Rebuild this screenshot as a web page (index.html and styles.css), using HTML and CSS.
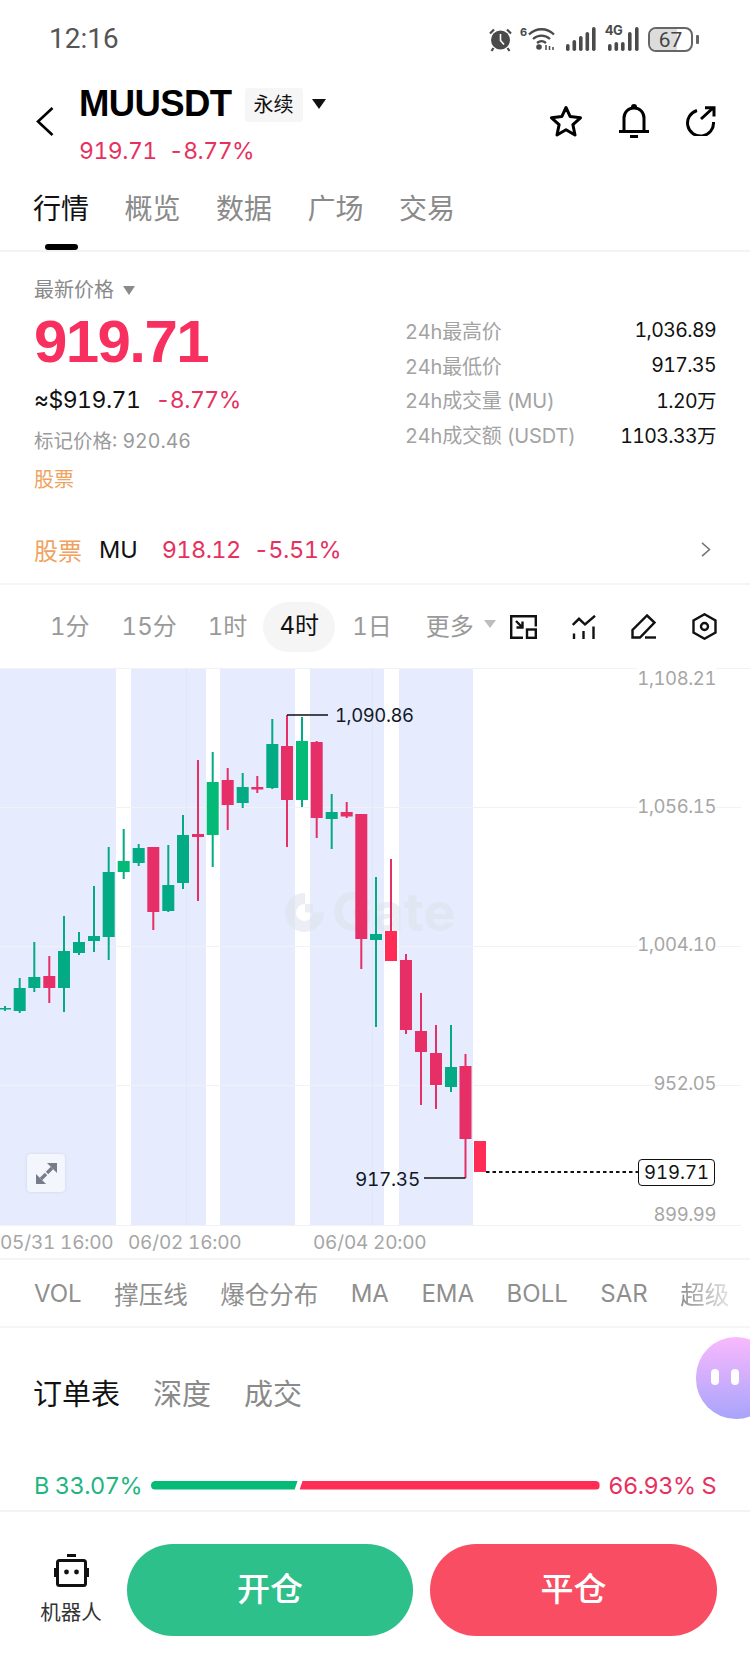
FILE: index.html
```html
<!DOCTYPE html>
<html lang="zh-CN">
<head>
  <meta charset="UTF-8">
  <meta name="viewport" content="width=device-width, initial-scale=1.0">
  <title>MUUSDT</title>
  <link rel="stylesheet" href="styles.css">
</head>

<body>

  <!-- Status bar -->
  <div class="status-bar">
    <span class="clock">12:16</span>
    <div class="status-icons">
      <svg class="alarm" width="25" height="25" viewBox="0 0 25 25">
        <circle cx="12.5" cy="13" r="9.5" fill="#4a4a4a"/>
        <path d="M12.5 7v6.5l3.5 4" fill="none" stroke="#fff" stroke-width="1.6"/>
        <path d="M2 6.5 6 2.5M23 6.5l-4-4M5.5 21 3.5 24M19.5 21l2 3" stroke="#4a4a4a" stroke-width="2.2" fill="none"/>
      </svg>
      <span class="wifi-six">6</span>
      <svg class="wifi" width="27" height="24" viewBox="0 0 27 24" fill="none" stroke="#4a4a4a" stroke-width="2.3">
        <path d="M1 7.5C8 .5 19 .5 26 7.5M5 12c5-4.5 12-4.5 17 0M9 16c3-2.5 6-2.5 9 0"/>
        <circle cx="11" cy="20" r="2.8" fill="#4a4a4a" stroke="none"/>
        <path d="M18 18v5M21.5 19v4M25 20v3" stroke-width="1.5"/>
      </svg>
      <svg class="bars" width="30" height="24" viewBox="0 0 30 24" fill="#4a4a4a">
        <rect x="0" y="17" width="3.6" height="7" rx="1.8"/>
        <rect x="6.5" y="13" width="3.6" height="11" rx="1.8"/>
        <rect x="13" y="9" width="3.6" height="15" rx="1.8"/>
        <rect x="19.5" y="5" width="3.6" height="19" rx="1.8"/>
        <rect x="26" y="0" width="3.6" height="24" rx="1.8"/>
      </svg>
      <div class="bars-4g">
        <span class="net-label">4G</span>
        <svg width="34" height="24" viewBox="0 0 34 24" fill="#4a4a4a">
          <rect x="3" y="17" width="3.6" height="7" rx="1.8"/>
          <rect x="9.5" y="15" width="3.6" height="9" rx="1.8"/>
          <rect x="16" y="15" width="3.6" height="9" rx="1.8"/>
          <rect x="23" y="5" width="3.6" height="19" rx="1.8"/>
          <rect x="30" y="0" width="3.6" height="24" rx="1.8"/>
        </svg>
      </div>
      <div class="battery">
        <div class="battery-fill"></div>
        <span class="battery-num">67</span>
      </div>
      <div class="battery-nub"></div>
    </div>
  </div>

  <!-- Header -->
  <header class="top-bar">
    <svg class="back" width="18" height="29" viewBox="0 0 18 29" fill="none" stroke="#000" stroke-width="2.6">
      <path d="M16.5 1 2 14.5 16.5 28"/>
    </svg>
    <div class="title-block">
      <div class="title-row">
        <span class="symbol">MUUSDT</span>
        <span class="badge">永续</span>
        <span class="title-caret"></span>
      </div>
      <div class="title-price">
        <span>919.71</span>
        <span>-8.77%</span>
      </div>
    </div>
    <div class="top-actions">
      <svg class="star" width="34" height="32" viewBox="0 0 34 32" fill="none" stroke="#000" stroke-width="3" stroke-linejoin="round">
        <path d="M17 2.5 21.2 11.6 31.5 12.8 23.9 19.6 26 30 17 24.8 8 30 10.1 19.6 2.5 12.8 12.8 11.6Z"/>
      </svg>
      <svg width="30" height="34" viewBox="0 0 30 34" fill="none" stroke="#000" stroke-width="3">
        <path d="M5 27V14C5 8 9.5 4 15 4S25 8 25 14V27"/>
        <path d="M0 27.5H30M11 32.5H19"/>
        <path d="M13.5 3A1.5 1.5 0 0 1 16.5 3"/>
      </svg>
      <svg width="32" height="30" viewBox="0 0 32 30" fill="none" stroke="#000" stroke-width="3">
        <path d="M13 4.5A13 13 0 1 0 29.5 16"/>
        <path d="M17 13 29 2M21 1.8H30V10.5"/>
      </svg>
    </div>
  </header>

  <nav class="main-tabs">
    <a class="tab active">行情</a>
    <a class="tab">概览</a>
    <a class="tab">数据</a>
    <a class="tab">广场</a>
    <a class="tab">交易</a>
  </nav>

  <!-- Price summary -->
  <section class="summary">
    <div class="summary-left">
      <div class="latest-label">最新价格 <span class="caret-grey"></span></div>
      <div class="big-price">919.71</div>
      <div class="usd-row">
        <span class="usd">≈$919.71</span>
        <span class="red">-8.77%</span>
      </div>
      <div class="mark-price">标记价格: 920.46</div>
      <div class="orange tag">股票</div>
    </div>
    <dl class="stats">
      <div class="stat"><dt>24h最高价</dt><dd>1,036.89</dd></div>
      <div class="stat"><dt>24h最低价</dt><dd>917.35</dd></div>
      <div class="stat"><dt>24h成交量 (MU)</dt><dd>1.20万</dd></div>
      <div class="stat"><dt>24h成交额 (USDT)</dt><dd>1103.33万</dd></div>
    </dl>
  </section>

  <div class="stock-row">
    <span class="orange stock-tag">股票</span>
    <span class="stock-name">MU</span>
    <span class="red stock-price">918.12</span>
    <span class="red stock-change">-5.51%</span>
    <svg class="stock-arrow" width="10" height="15" viewBox="0 0 10 15" fill="none" stroke="#777" stroke-width="1.6">
      <path d="M1 .8 8.5 7.5 1 14.2"/>
    </svg>
  </div>

  <!-- Period selector -->
  <div class="period-row">
    <div class="periods">
      <span class="period p1">1分</span>
      <span class="period p2">15分</span>
      <span class="period p3">1时</span>
      <span class="period current">4时</span>
      <span class="period p5">1日</span>
      <span class="period p6">更多<i class="caret-light"></i></span>
    </div>
    <div class="chart-tools">
      <svg width="27" height="24" viewBox="0 0 27 24" fill="none" stroke="#111" stroke-width="2.4">
        <path d="M13 22.8H1.2V1.2H25.8V11.5"/>
        <rect x="17" y="14.5" width="8.8" height="8.3"/>
        <path d="M6 6 12 12M12.5 6.5V12.5H6.5"/>
      </svg>
      <svg width="24" height="24" viewBox="0 0 24 24" fill="none" stroke="#111" stroke-width="2.4">
        <path d="M.8 10 7 3.8 13 9.5 23 .8"/>
        <path d="M2 18.5V24M11.5 16V24M21.5 11.5V24"/>
      </svg>
      <svg width="26" height="25" viewBox="0 0 26 25" fill="none" stroke="#111" stroke-width="2.4">
        <path d="M16 1.5 23.5 8.5 9 23.5H1.5V16Z"/>
        <path d="M14 23.5H25"/>
      </svg>
      <svg width="25" height="27" viewBox="0 0 25 27" fill="none" stroke="#111" stroke-width="2.4">
        <path d="M12.5 1.3 23.5 7.5V19.5L12.5 25.7 1.5 19.5V7.5Z"/>
        <circle cx="12.5" cy="13.5" r="3.5"/>
      </svg>
    </div>
  </div>

  <!-- Chart: coordinates in the svg are page pixels -->
  <div class="chart">
    <svg class="chart-svg" width="750" height="558" viewBox="0 668 750 558">
      <g fill="#e6ebfd">
        <rect x="0" y="668" width="116" height="557"/>
        <rect x="131" y="668" width="75" height="557"/>
        <rect x="220" y="668" width="75" height="557"/>
        <rect x="310" y="668" width="74" height="557"/>
        <rect x="399" y="668" width="74" height="557"/>
      </g>
      <g stroke="#f2f2f4" stroke-width="1">
        <path d="M0 668.5H750"/>
        <path d="M0 807.5H741M0 946.5H741M0 1085.5H741M0 1225.5H741"/>
        <path d="M186.5 668V1225M372.5 668V1225" stroke="#e1e6f8"/>
      </g>

      <!-- watermark -->
      <g fill="#dee3ee" opacity="0.6">
        <path d="M305 893a19.5 19.5 0 1 0 19 19.5H313a8.5 8.5 0 1 1-8-8.5Z"/>
        <path d="M305 904h8v8.5h-8Z"/>
      </g>
      <text class="watermark" x="332" y="931">Gate</text>

      <!-- wicks and bodies -->
      <g class="up">
        <path d="M5 1006V1011M19.7 978V1013M34.3 942V992M64 916V1012M79 932V955M94 886V952M108.7 847V960M123.7 829V879M138.7 844V866M168.3 845V912M183 815V889M212.7 752V867M242.7 773V808M272.3 719V789M302 717V807M331.7 794V849M376 877V1027M451 1025V1092"/>
      </g>
      <g class="up-fill">
        <rect x="0" y="1008" width="11" height="1.5"/>
        <rect x="13.7" y="988" width="12" height="23"/>
        <rect x="28.3" y="977" width="12" height="11"/>
        <rect x="58" y="951" width="12" height="37"/>
        <rect x="73" y="942" width="12" height="11"/>
        <rect x="88" y="936" width="12" height="5"/>
        <rect x="102.7" y="872" width="12" height="65"/>
        <rect class="bright" x="117.7" y="861" width="12" height="11"/>
        <rect x="132.7" y="848" width="12" height="15"/>
        <rect x="162.3" y="885" width="12" height="26"/>
        <rect x="177" y="835" width="12" height="48"/>
        <rect class="bright" x="206.7" y="782" width="12" height="53"/>
        <rect x="236.7" y="787" width="12" height="16"/>
        <rect x="266.3" y="744" width="12" height="44"/>
        <rect class="bright" x="296" y="741" width="12" height="59"/>
        <rect x="325.7" y="812" width="12" height="7"/>
        <rect x="370" y="934" width="12" height="6"/>
        <rect x="445" y="1067" width="12" height="20"/>
      </g>
      <g class="down">
        <path d="M49.3 956V1003M153.3 847V930M198 760V901M227.7 768V830M257.3 776V793M287 715V847M316.7 741V838M346.7 802V818M361.3 814V969M391 859V960M406 954V1034M421 993V1105M436 1025V1109M465.5 1054V1178"/>
      </g>
      <g class="down-fill">
        <rect x="43.3" y="976" width="12" height="12"/>
        <rect x="147.3" y="847" width="12" height="65"/>
        <rect x="192" y="834" width="12" height="3"/>
        <rect x="221.7" y="780" width="12" height="25"/>
        <rect x="251.3" y="787" width="12" height="2.5"/>
        <rect x="281" y="746" width="12" height="54"/>
        <rect x="310.7" y="742" width="12" height="76"/>
        <rect x="340.7" y="812" width="12" height="4.5"/>
        <rect x="355.3" y="814" width="12" height="125"/>
        <rect class="bright" x="385" y="931" width="12" height="30"/>
        <rect x="400" y="960" width="12" height="70"/>
        <rect x="415" y="1031" width="12" height="21"/>
        <rect x="430" y="1053" width="12" height="32"/>
        <rect x="459.5" y="1066" width="12" height="73"/>
        <rect class="bright" x="474" y="1141" width="12" height="31"/>
      </g>

      <!-- hi/lo markers and current price -->
      <path d="M287 715H328M424 1178H465.5" stroke="#111" stroke-width="1.4" fill="none"/>
      <path d="M486 1172H638" stroke="#111" stroke-width="2" stroke-dasharray="3.5 3" fill="none"/>
    </svg>

    <span class="axis axis-1">1,108.21</span>
    <span class="axis axis-2">1,056.15</span>
    <span class="axis axis-3">1,004.10</span>
    <span class="axis axis-4">952.05</span>
    <span class="axis axis-5">899.99</span>
    <span class="mark-hi">1,090.86</span>
    <span class="mark-lo">917.35</span>
    <span class="price-tag">919.71</span>

    <div class="expand">
      <svg width="21" height="21" viewBox="0 0 21 21" fill="#777d88" stroke="#777d88" stroke-width="3.4">
        <path d="M11 10 16 5" fill="none"/>
        <path d="M10 11 5 16" fill="none"/>
        <path d="M21 0V10L11 0Z" stroke="none"/>
        <path d="M0 21V11L10 21Z" stroke="none"/>
      </svg>
    </div>
  </div>

  <div class="time-axis">
    <span class="t1">05/31 16:00</span>
    <span class="t2">06/02 16:00</span>
    <span class="t3">06/04 20:00</span>
  </div>

  <!-- Indicators -->
  <div class="indicators">
    <span>VOL</span>
    <span class="zh">撑压线</span>
    <span class="zh">爆仓分布</span>
    <span>MA</span>
    <span>EMA</span>
    <span>BOLL</span>
    <span>SAR</span>
    <span class="zh fade">超级</span>
  </div>

  <!-- Order book -->
  <div class="book-tabs">
    <a class="tab active-plain">订单表</a>
    <a class="tab">深度</a>
    <a class="tab">成交</a>
  </div>

  <div class="bubble">
    <i></i><i></i>
  </div>

  <div class="ratio">
    <span class="ratio-buy">B 33.07%</span>
    <div class="ratio-bar">
      <div class="bar-buy"></div>
      <div class="bar-sell"></div>
    </div>
    <span class="ratio-sell">66.93% S</span>
  </div>

  <!-- Bottom actions -->
  <footer class="actions">
    <div class="robot">
      <svg width="35" height="33" viewBox="0 0 35 33">
        <rect x="3.5" y="6.5" width="28" height="25" rx="2" fill="#fff" stroke="#111" stroke-width="3"/>
        <rect x="13" y="0" width="9" height="3" fill="#111"/>
        <rect x="0" y="14" width="2" height="9" fill="#111"/>
        <rect x="33" y="14" width="2" height="9" fill="#111"/>
        <circle cx="12.5" cy="18" r="2.4" fill="#111"/>
        <circle cx="22.5" cy="18" r="2.4" fill="#111"/>
      </svg>
      <span>机器人</span>
    </div>
    <button class="btn btn-open">开仓</button>
    <button class="btn btn-close">平仓</button>
  </footer>

</body>
</html>
```

FILE: styles.css
```css
* {
  box-sizing: border-box;
}

body {
  margin: 0;
  width: 750px;
  height: 1669px;
  position: relative;
  overflow: hidden;
  background-color: #fff;
  font-family: Inter, "Noto Sans CJK SC", sans-serif;
  font-variant-numeric: tabular-nums;
  color: #111;
}

.red {
  color: #e6315f;
}

.orange {
  color: #efa35f;
}

/* Status bar */
.status-bar {
  height: 78px;
  padding: 24px 51px 0 49px;
  display: flex;
  justify-content: space-between;
}

.clock {
  font-family: Roboto, sans-serif;
  font-size: 28px;
  line-height: 30px;
  color: #555;
}

.status-icons {
  display: flex;
  height: 30px;
  align-items: center;
  position: relative;
}

.alarm {
  margin-right: 7px;
}

.wifi-six {
  font-size: 11px;
  font-weight: bold;
  color: #4a4a4a;
  align-self: flex-start;
  margin: 1px 1px 0 0;
}

.wifi {
  margin-right: 11px;
}

.bars {
  margin-right: 9px;
}

.bars-4g {
  position: relative;
  margin-right: 9px;
  display: flex;
}

.bars-4g svg {
  display: block;
}

.net-label {
  position: absolute;
  left: 0;
  top: -3px;
  font-size: 13px;
  font-weight: bold;
  color: #4a4a4a;
  letter-spacing: -0.5px;
  line-height: 13px;
}

.battery {
  width: 45px;
  height: 25px;
  border: 2px solid #666;
  border-radius: 8px;
  position: relative;
  overflow: hidden;
  text-align: center;
}

.battery-fill {
  width: 67%;
  height: 100%;
  background-color: #dcdcdc;
}

.battery-num {
  position: absolute;
  left: 0;
  right: 0;
  top: -1px;
  font-family: Roboto, sans-serif;
  font-size: 21px;
  line-height: 24px;
  color: #444;
}

.battery-nub {
  width: 3px;
  height: 9px;
  margin-left: 3px;
  background-color: #666;
  border-radius: 1px;
}

/* Header */
.top-bar {
  height: 90px;
  padding: 8px 34px 0 36px;
  display: flex;
  position: relative;
}

.back {
  margin: 21px 25px 0 0;
}

.title-row {
  display: flex;
  align-items: center;
  height: 36px;
}

.symbol {
  font-family: "Liberation Sans", sans-serif;
  font-size: 36.5px;
  font-weight: bold;
  line-height: 36px;
  letter-spacing: -0.6px;
  color: #000;
}

.badge {
  margin: 2px 0 0 13px;
  width: 58px;
  height: 34px;
  line-height: 34px;
  text-align: center;
  font-size: 20px;
  background-color: #f6f6f6;
  border-radius: 3px;
}

.title-caret {
  margin-left: 9px;
  width: 0;
  height: 0;
  border-left: 7.5px solid transparent;
  border-right: 7.5px solid transparent;
  border-top: 10px solid #111;
}

.title-price {
  margin-top: 17px;
  font-size: 23px;
  line-height: 24px;
  letter-spacing: -0.5px;
  color: #e6315f;
  display: flex;
  gap: 12px;
}

.top-actions {
  margin-left: auto;
  display: flex;
  align-items: center;
  gap: 35px;
  height: 44px;
  margin-top: 13px;
}

.top-actions .star {
  margin-right: 1px;
}

/* Tabs */
.main-tabs {
  height: 84px;
  padding: 26px 0 0 33px;
  display: flex;
  gap: 35.5px;
  border-bottom: 2px solid #f3f3f3;
  position: relative;
}

.tab {
  font-size: 28px;
  line-height: 30px;
  color: #8a8a8a;
  position: relative;
}

.tab.active {
  color: #111;
}

.tab.active::after {
  content: "";
  position: absolute;
  left: 12px;
  top: 50px;
  width: 33px;
  height: 6px;
  border-radius: 3px;
  background-color: #000;
}

/* Summary */
.summary {
  height: 252px;
  padding: 0 34px;
  display: flex;
  justify-content: space-between;
}

.latest-label {
  margin-top: 27px;
  font-size: 20px;
  line-height: 22px;
  color: #8a8a8a;
  display: flex;
  align-items: center;
  gap: 9px;
}

.caret-grey {
  width: 0;
  height: 0;
  border-left: 6.5px solid transparent;
  border-right: 6.5px solid transparent;
  border-top: 9px solid #8a8a8a;
}

.big-price {
  margin-top: 11px;
  font-family: "Liberation Sans", sans-serif;
  font-size: 60px;
  font-weight: bold;
  line-height: 60px;
  letter-spacing: -1.6px;
  color: #f7305f;
}

.usd-row {
  margin-top: 14px;
  font-size: 23px;
  line-height: 28px;
  letter-spacing: -0.5px;
  display: flex;
  gap: 15px;
}

.mark-price {
  margin-top: 15px;
  font-size: 19.5px;
  line-height: 24px;
  color: #9a9a9a;
}

.tag {
  margin-top: 15px;
  font-size: 20px;
  line-height: 24px;
}

.stats {
  margin: 61px 0 0;
  width: 311px;
}

.stat {
  height: 34.7px;
  display: flex;
  justify-content: space-between;
  align-items: center;
  font-size: 19.5px;
}

.stat dt {
  color: #a3a3a3;
  font-size: 20px;
  letter-spacing: -0.2px;
}

.stat dd {
  margin: 0;
  letter-spacing: -0.6px;
  color: #111;
}

/* Stock row */
.stock-row {
  height: 81px;
  padding: 12px 39px 0 34px;
  display: flex;
  align-items: center;
  font-size: 23.5px;
  border-bottom: 2px solid #f5f5f5;
}

.stock-tag {
  font-size: 24px;
  margin-right: 17px;
}

.stock-name {
  margin-right: 24px;
}

.stock-price {
  margin-right: 13px;
  letter-spacing: -0.6px;
}

.stock-change {
  letter-spacing: -0.5px;
}

.stock-arrow {
  margin-left: auto;
}

/* Period row */
.period-row {
  height: 83px;
  display: flex;
  align-items: center;
  padding-left: 50px;
}

.periods {
  display: flex;
  align-items: center;
  font-size: 24px;
  color: #9a9a9a;
}

.period {
  margin-bottom: 5px;
}

.period.p2 {
  margin-left: 32px;
}

.period.p3 {
  margin-left: 31px;
}

.period.current {
  margin: 0 0 0 16px;
  width: 72px;
  height: 50px;
  line-height: 47px;
  text-align: center;
  border-radius: 25px;
  background-color: #f5f5f5;
  color: #111;
}

.period.p5 {
  margin-left: 17px;
}

.period.p6 {
  margin-left: 34px;
  display: flex;
  align-items: center;
}

.caret-light {
  margin-left: 10px;
  width: 0;
  height: 0;
  border-left: 6px solid transparent;
  border-right: 6px solid transparent;
  border-top: 8px solid #bdbdbd;
}

.chart-tools {
  margin-left: auto;
  padding-right: 33px;
  display: flex;
  align-items: center;
  gap: 35px;
}

/* Chart */
.chart {
  position: relative;
  height: 558px;
}

.chart-svg {
  display: block;
}

.up {
  stroke: #03ab85;
  stroke-width: 2;
  fill: none;
}

.up-fill {
  fill: #03ab85;
}

.up-fill .bright {
  fill: #03ba76;
}

.down {
  stroke: #e62f66;
  stroke-width: 2;
  fill: none;
}

.down-fill {
  fill: #e62f66;
}

.down-fill .bright {
  fill: #ff2d55;
}

.watermark {
  font-size: 54px;
  font-weight: bold;
  fill: #dee3ee;
  opacity: 0.6;
}

.axis {
  position: absolute;
  right: 34px;
  font-size: 18.5px;
  line-height: 22px;
  letter-spacing: -0.4px;
  color: #a6a6a6;
  background-color: #fff;
}

.axis-1 { top: -1px; }
.axis-2 { top: 127px; }
.axis-3 { top: 265px; }
.axis-4 { top: 404px; }
.axis-5 { top: 535px; }

.mark-hi,
.mark-lo {
  position: absolute;
  line-height: 22px;
  color: #111827;
}

.mark-hi {
  left: 335px;
  top: 36px;
  font-size: 18.5px;
  letter-spacing: -0.4px;
}

.mark-lo {
  left: 355px;
  top: 501px;
  font-size: 19px;
  letter-spacing: -0.3px;
}

.price-tag {
  position: absolute;
  left: 638px;
  top: 491px;
  width: 77px;
  height: 27px;
  border: 1.5px solid #111;
  border-radius: 4px;
  background-color: #fff;
  font-size: 18.5px;
  line-height: 24px;
  text-align: center;
}

.expand {
  position: absolute;
  left: 27px;
  top: 486px;
  width: 38px;
  height: 38px;
  display: flex;
  align-items: center;
  justify-content: center;
  border-radius: 4px;
  background-color: #f4f6fe;
  box-shadow: 0 0 3px rgba(120, 130, 160, 0.2);
}

/* Time axis */
.time-axis {
  height: 34px;
  position: relative;
  border-bottom: 2px solid #f4f4f4;
  font-size: 19px;
  line-height: 34px;
  letter-spacing: -0.2px;
  color: #a6a6a6;
}

.time-axis span {
  position: absolute;
  top: 0;
}

.t1 { left: 0; }
.t2 { left: 128px; }
.t3 { left: 313px; }

/* Indicator strip */
.indicators {
  height: 68px;
  padding-left: 34px;
  display: flex;
  align-items: center;
  gap: 32.5px;
  font-size: 24px;
  color: #8f8f8f;
  border-bottom: 2px solid #f6f6f6;
  overflow: hidden;
  white-space: nowrap;
}

.indicators .zh {
  font-size: 24.5px;
}

.indicators .fade {
  -webkit-mask-image: linear-gradient(to right, #000, rgba(0, 0, 0, 0.25));
  mask-image: linear-gradient(to right, #000, rgba(0, 0, 0, 0.25));
}

/* Order book */
.book-tabs {
  height: 124px;
  padding: 52px 0 0 33px;
  display: flex;
  gap: 33px;
}

.book-tabs .tab {
  font-size: 29px;
}

.tab.active-plain {
  color: #111;
}

.bubble {
  position: absolute;
  left: 696px;
  top: 1337px;
  width: 80px;
  height: 82px;
  border-radius: 40px;
  background: linear-gradient(#f9b9fd, #a7a4fb);
  display: flex;
  gap: 12px;
  padding: 32px 0 0 15px;
}

.bubble i {
  display: block;
  width: 8px;
  height: 16px;
  border-radius: 4px;
  background-color: #fff;
}

.ratio {
  height: 60px;
  padding: 8px 34px 0;
  display: flex;
  align-items: center;
  justify-content: space-between;
  font-size: 23.5px;
  letter-spacing: -0.5px;
  border-bottom: 2px solid #f3f3f3;
}

.ratio-buy {
  color: #1fb581;
}

.ratio-sell {
  color: #e6315f;
}

.ratio-bar {
  width: 449px;
  display: flex;
  gap: 2px;
}

.bar-buy {
  width: 147px;
  height: 9px;
  background-color: #03ba76;
  border-radius: 5px 0 0 5px;
  clip-path: polygon(0 0, 100% 0, 98% 100%, 0 100%);
}

.bar-sell {
  flex: 1;
  height: 9px;
  background-color: #ff2d55;
  border-radius: 0 5px 5px 0;
  clip-path: polygon(1% 0, 100% 0, 100% 100%, 0 100%);
}

/* Bottom actions */
.actions {
  padding: 32px 33px 0 0;
  display: flex;
}

.robot {
  width: 127px;
  display: flex;
  flex-direction: column;
  align-items: center;
  padding: 10px 0 0 15px;
  font-size: 20.5px;
  color: #333;
}

.robot span {
  margin-top: 14px;
  line-height: 24px;
}

.btn {
  height: 92px;
  padding: 0 0 6px;
  border: none;
  border-radius: 46px;
  font-family: inherit;
  font-size: 33px;
  font-weight: 500;
  color: #fff;
}

.btn-open {
  width: 286px;
  background-color: #2dc08a;
}

.btn-close {
  width: 287px;
  margin-left: 17px;
  background-color: #f94d63;
}
```
